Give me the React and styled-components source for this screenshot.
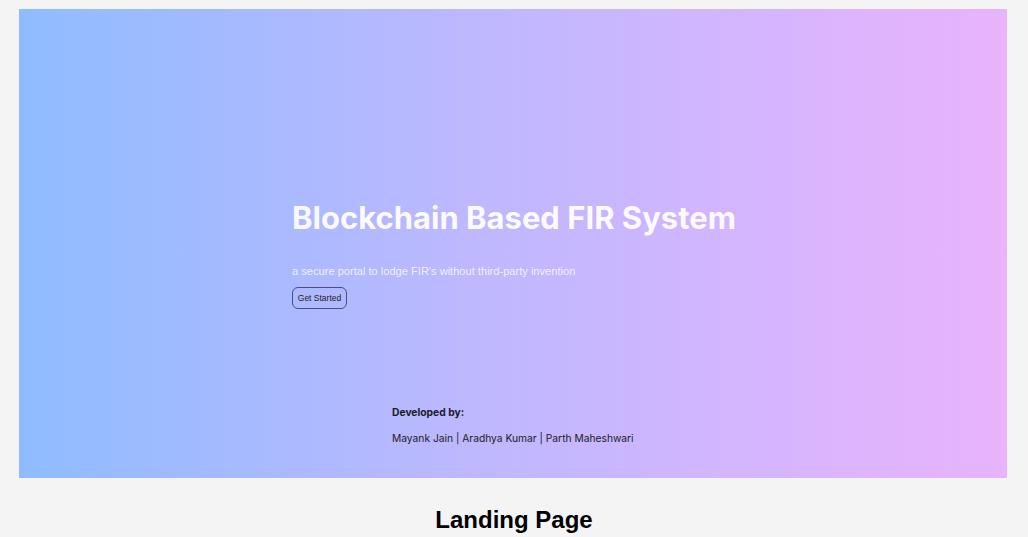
import styled, { createGlobalStyle } from 'styled-components'

const GlobalStyle = createGlobalStyle`
  body {
    margin: 0;
    background: #f4f4f4;
  }
`

const Page = styled.div`
  display: flex;
  flex-direction: column;
  align-items: flex-start;
  padding: 9px 0 0 19px;
  width: 1028px;
  height: 537px;
  box-sizing: border-box;
`

const Panel = styled.section`
  width: 988px;
  height: 469px;
  background: linear-gradient(90deg, #8fbcff 0%, #bdb8ff 45%, #e9b3fd 100%);
  display: flex;
  flex-direction: column;
  padding: 190px 0 0 273px;
  box-sizing: border-box;
  font-family: Inter, 'Noto Sans', sans-serif;
`

const Title = styled.h1`
  margin: 0;
  font-size: 31px;
  font-weight: 700;
  color: rgba(255, 255, 255, 0.95);
  letter-spacing: 0;
`

const Tagline = styled.p`
  margin: 29px 0 0;
  font-family: 'Liberation Sans', Arial, sans-serif;
  font-size: 11.1px;
  color: rgba(255, 255, 255, 0.8);
`

const Button = styled.button`
  margin-top: 10px;
  align-self: flex-start;
  height: 22px;
  width: 55px;
  padding: 0;
  border: 1px solid #4a4f78;
  border-radius: 6px;
  background: transparent;
  font-family: 'Liberation Sans', Arial, sans-serif;
  font-size: 8.5px;
  color: #1d1d2a;
`

const Credits = styled.div`
  margin: 97px 0 0 100px;
  display: flex;
  flex-direction: column;
  gap: 14px;
  color: #1b1b26;
`

const CreditsTitle = styled.div`
  font-size: 10.3px;
  font-weight: 700;
`

const Names = styled.div`
  font-size: 10.25px;
`

const Caption = styled.h2`
  align-self: center;
  margin: 28px 0 0 -19px;
  font-family: 'Liberation Sans', Arial, sans-serif;
  font-size: 24px;
  font-weight: 700;
  color: #000;
`

const App = () => {
  return (
    <Page>
      <GlobalStyle />
      <Panel>
        <Title>Blockchain Based FIR System</Title>
        <Tagline>a secure portal to lodge FIR's without third-party invention</Tagline>
        <Button>Get Started</Button>
        <Credits>
          <CreditsTitle>Developed by:</CreditsTitle>
          <Names>Mayank Jain | Aradhya Kumar | Parth Maheshwari</Names>
        </Credits>
      </Panel>
      <Caption>Landing Page</Caption>
    </Page>
  )
}

export default App
